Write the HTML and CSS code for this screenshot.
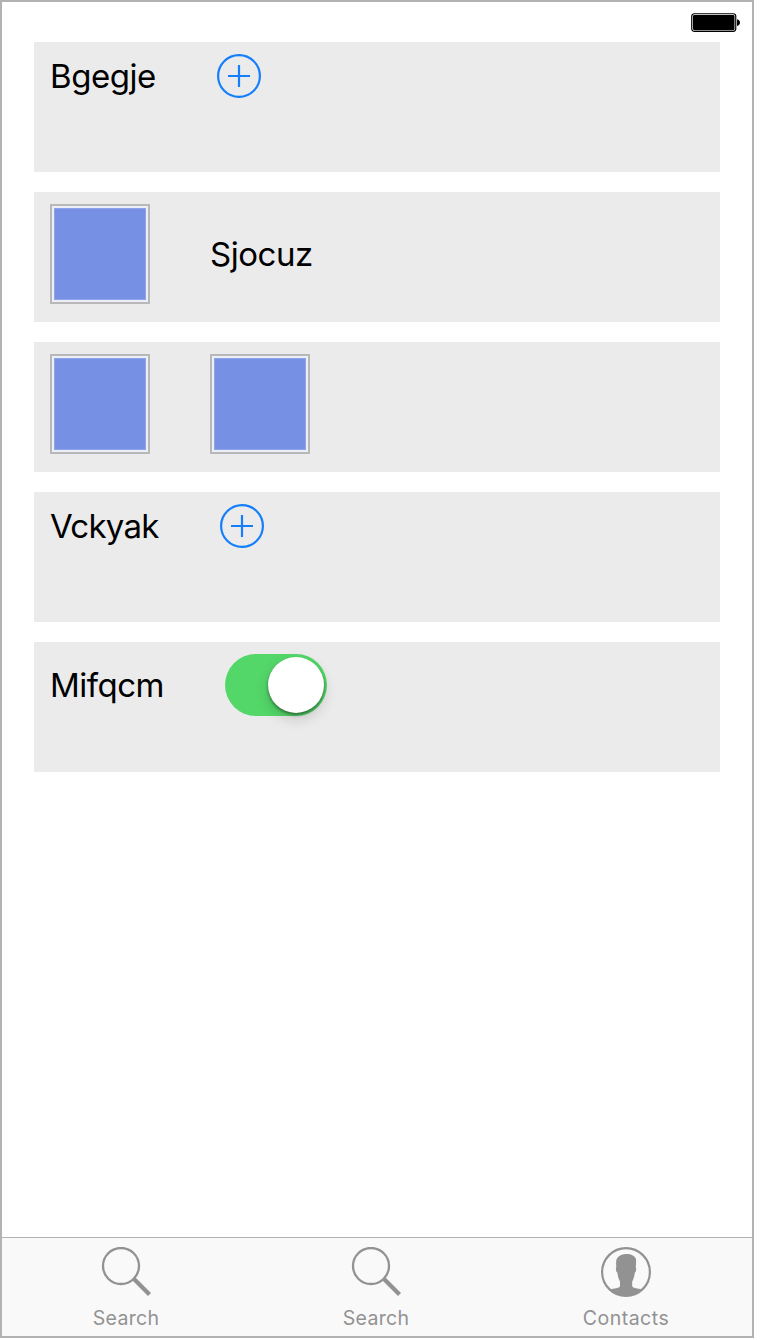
FILE: index.html
```html
<!DOCTYPE html>
<html lang="en">
<head>
<meta charset="utf-8">
<title>Stack rows</title>
<link rel="stylesheet" href="styles.css">
</head>
<body>
<div class="phone">
  <header class="status">
    <svg class="battery" width="50" height="20" viewBox="0 0 50 20">
      <rect x="0.750" y="0.750" width="44" height="17.600" rx="2.500" fill="#fff" stroke="#000" stroke-width="1.200"/>
      <rect x="2" y="2" width="41.500" height="15.200" rx="1.400" fill="#000"/>
      <path d="M46 6.200c1.800.3 3 1.800 3 3.400s-1.200 3.100-3 3.400z" fill="#000"/>
    </svg>
  </header>
  <main class="rows">
    <section class="row">
      <span class="label bgegje">Bgegje</span>
      <svg class="add" width="44" height="44" viewBox="0 0 44 44"><circle cx="22" cy="22" r="20.900"/><path d="M22 11v22M11 22h22"/></svg>
    </section>
    <section class="row">
      <div class="tile"></div>
      <span class="label sjocuz">Sjocuz</span>
    </section>
    <section class="row">
      <div class="tile"></div>
      <div class="tile"></div>
    </section>
    <section class="row">
      <span class="label vckyak">Vckyak</span>
      <svg class="add" width="44" height="44" viewBox="0 0 44 44"><circle cx="22" cy="22" r="20.900"/><path d="M22 11v22M11 22h22"/></svg>
    </section>
    <section class="row">
      <span class="label mifqcm">Mifqcm</span>
      <div class="switch"><div class="knob"></div></div>
    </section>
  </main>
  <nav class="tabs">
    <div class="tab">
      <svg class="icon" width="50" height="50" viewBox="0 0 50 50"><circle cx="20" cy="19" r="18" fill="none" stroke="#929292" stroke-width="2.300"/><path d="M32.500 31.500L48.500 47.500" stroke="#929292" stroke-width="4.200"/></svg>
      <span class="caption search">Search</span>
    </div>
    <div class="tab">
      <svg class="icon" width="50" height="50" viewBox="0 0 50 50"><circle cx="20" cy="19" r="18" fill="none" stroke="#929292" stroke-width="2.300"/><path d="M32.500 31.500L48.500 47.500" stroke="#929292" stroke-width="4.200"/></svg>
      <span class="caption search">Search</span>
    </div>
    <div class="tab">
      <svg class="icon" width="50" height="50" viewBox="0 0 50 50"><circle cx="25" cy="25" r="23.900" fill="none" stroke="#929292" stroke-width="2.200"/><path d="M15.300 20C14.900 15 15 12.500 16.500 10.800C18 8.500 21.500 7 25.500 7C30 7 34.700 9 35 12.500C35.200 15 35 17 34.800 20.500C35.600 21 35.200 25 33.800 25.800C33.500 29 32.700 32 31.200 34.500V39C31.500 41.500 37 41 41.500 42.800A24.500 24.500 0 0 1 8.500 42.800C13 41 18.700 41.500 19 39V34.500C17.500 32 16.700 29 16.400 25.800C15 25 14.400 21 15.300 20Z" fill="#929292"/></svg>
      <span class="caption contacts">Contacts</span>
    </div>
  </nav>
</div>
</body>
</html>
```
FILE: styles.css
```css
body {
  margin: 0;
  background: #fff;
  font-family: Inter, "Liberation Sans", sans-serif;
}

.phone {
  box-sizing: border-box;
  width: 754px;
  height: 1338px;
  border: 2px solid #b2b2b2;
  display: flex;
  flex-direction: column;
}

.status {
  height: 40px;
  box-sizing: border-box;
  padding: 11px 11px 0 0;
  display: flex;
  justify-content: flex-end;
  align-items: flex-start;
}

.battery { display: block; }

.rows {
  flex: 1;
  padding: 0 32px;
  display: flex;
  flex-direction: column;
  gap: 20px;
}

.row {
  box-sizing: border-box;
  height: 130px;
  padding: 12px 16px 18px;
  background: #ebebeb;
  display: grid;
  grid-auto-flow: column;
  justify-content: start;
  align-content: start;
  align-items: center;
  column-gap: 60px;
}

.label {
  font-size: 33px;
  line-height: 40px;
  color: #000;
  white-space: nowrap;
}

.bgegje { width: 107px; letter-spacing: -0.45px; }
.sjocuz { width: 103px; letter-spacing: -0.45px; }
.vckyak { width: 110px; letter-spacing: -0.75px; }
.mifqcm { width: 115px; letter-spacing: -0.5px; }

.add {
  display: block;
  fill: none;
  stroke: #147efb;
  stroke-width: 2.2;
}

.tile {
  box-sizing: border-box;
  width: 100px;
  height: 100px;
  padding: 2px;
  border: 2px solid #b8b8b8;
  background: #7690e3 content-box;
  box-shadow: inset 0 0 0 2px #edeff8, inset 0 0 0 3px #8ea3e9;
}

.switch {
  box-sizing: border-box;
  width: 102px;
  height: 62px;
  padding: 3px;
  border-radius: 31px;
  background: #53d769;
  display: flex;
  justify-content: flex-end;
}

.knob {
  width: 56px;
  height: 56px;
  border-radius: 50%;
  background: #fff;
  box-shadow: 0 6px 14px rgba(0, 0, 0, 0.16), 0 2px 3px rgba(0, 0, 0, 0.4);
}

.tabs {
  height: 98px;
  border-top: 1px solid #b2b2b2;
  background: #f9f9f9;
  display: grid;
  grid-template-columns: repeat(3, 250px);
}

.tab {
  padding: 9px 2px 0 0;
  display: flex;
  flex-direction: column;
  align-items: center;
}

.icon { display: block; }

.caption {
  margin-top: 9px;
  font-size: 19.5px;
  line-height: 24px;
  color: #929292;
  white-space: nowrap;
}

.search { letter-spacing: 0.3px; }
.contacts { letter-spacing: 0.5px; }
```
